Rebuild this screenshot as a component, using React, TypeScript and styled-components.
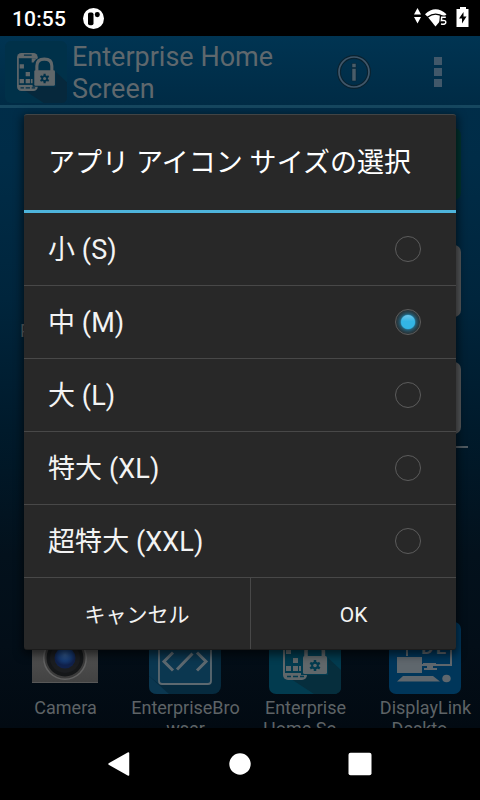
import React from "react";
import styled, { createGlobalStyle } from "styled-components";

const GlobalStyle = createGlobalStyle`
  * { box-sizing: border-box; }
  html, body { margin: 0; padding: 0; background: #000; overflow: hidden; }
  body { font-family: Roboto, "Noto Sans CJK JP", sans-serif; }
  button { font: inherit; border: 0; background: none; padding: 0; color: inherit; }
  svg { flex: none; display: block; }
`;

const Screen = styled.div`
  width: 480px;
  height: 800px;
  display: flex;
  flex-direction: column;
  background: #000;
  overflow: hidden;
`;

const StatusBar = styled.div`
  height: 36px;
  flex: none;
  display: flex;
  align-items: center;
  padding: 0 9px 0 12px;
  color: #fff;
`;

const Clock = styled.span`
  width: 71px;
  font-size: 21px;
  font-weight: 500;
  line-height: 36px;
  letter-spacing: 0.15px;
  padding-top: 1px;
`;

const StatusIcons = styled.div`
  margin-left: auto;
  display: flex;
  align-items: center;
`;

const Desktop = styled.main`
  position: relative;
  height: 692px;
  flex: none;
  overflow: hidden;
  background: linear-gradient(180deg, #002e4a 0%, #002c47 18%, #00253c 38%, #001a2b 57%, #03111c 75%, #030e18 88%, #020a12 100%);
`;

const AppBar = styled.header`
  height: 72px;
  display: flex;
  align-items: center;
  background: linear-gradient(180deg, #003452 0%, #002b45 100%);
  border-bottom: 3px solid #16475f;
  padding: 3px 0 0 5px;
`;

const AppTitle = styled.h1`
  width: 232px;
  flex: none;
  margin: 0 0 0 5px;
  font-size: 27px;
  font-weight: 400;
  line-height: 32px;
  padding-top: 1px;
  color: #5f686d;
`;

const AppBarActions = styled.div`
  flex: 1;
  display: flex;
  align-items: center;
  padding-left: 33px;
  gap: 63px;
`;

const AppGrid = styled.div`
  display: grid;
  grid-template-columns: repeat(4, 120px);
  grid-template-rows: 117px 117px 117px 143px 110px;
  padding: 20px 0 0 5px;
`;

const AppCell = styled.div<{ $column?: number; $row: number }>`
  grid-column: ${(p) => p.$column ?? 1};
  grid-row: ${(p) => p.$row};
  display: flex;
  flex-direction: column;
  align-items: center;
`;

const AppLabel = styled.span<{ $align?: string }>`
  margin-top: 3px;
  width: 120px;
  padding-left: ${(p) => (p.$align ? "15px" : "1px")};
  font-size: 18px;
  line-height: 21px;
  text-align: ${(p) => p.$align ?? "center"};
  color: #5e6366;
  white-space: pre;
`;

const Tile = styled.div<{ $color: string }>`
  width: 72px;
  height: 72px;
  flex: none;
  border-radius: 7px;
  background: ${(p) => p.$color};
`;

const Underline = styled.div`
  width: 86px;
  height: 2px;
  margin-top: 12px;
  background: #505a61;
`;

const Dialog = styled.section`
  position: absolute;
  left: 24px;
  top: 78px;
  width: 432px;
  height: 536px;
  display: flex;
  flex-direction: column;
  background: #282828;
  border-radius: 3px;
  border-top: 1px solid #414445;
  border-bottom: 1px solid #1c1c1c;
  box-shadow: 0 3px 9px 2px rgba(0, 0, 0, 0.55);
  color: #f3f3f3;
`;

const DialogTitle = styled.h2`
  margin: 0;
  height: 98px;
  flex: none;
  padding: 2px 0 0 24px;
  border-bottom: 3px solid #4eb4dc;
  font-size: 27px;
  font-weight: 400;
  line-height: 92px;
  letter-spacing: 0.06px;
  color: #fff;
  white-space: nowrap;
`;

const Option = styled.label`
  height: 73px;
  flex: none;
  display: flex;
  align-items: center;
  justify-content: space-between;
  padding: 0 35px 0 24px;
  border-bottom: 1px solid #484848;
`;

const OptionText = styled.span`
  padding-top: 2px;
  font-size: 27px;
  line-height: 40px;
  letter-spacing: 0.08px;
`;

const Radio = styled.span<{ $checked: boolean }>`
  width: 26px;
  height: 26px;
  flex: none;
  display: grid;
  place-items: center;
  border-radius: 50%;
  border: 1px solid #5c5c5c;
  ${(p) =>
    p.$checked &&
    `background: radial-gradient(circle, #33b5e5 0 6px, #235a71 8px, #27414c 10px, #292e30 12.5px);`}
  &::after {
    content: "";
    width: 14px;
    height: 14px;
    border-radius: 50%;
    background: ${(p) => (p.$checked ? "linear-gradient(#70c6e9 0, #33b5e5 45%)" : "transparent")};
  }
`;

const ButtonBar = styled.div`
  flex: 1;
  display: grid;
  grid-template-columns: 227px 1fr;
`;

const DialogButton = styled.button`
  padding-top: 2px;
  font-size: 21px;
  line-height: 30px;
  border-right: 1px solid #484848;
  &:last-child { border-right: 0; }
`;

const NavBar = styled.nav`
  height: 72px;
  flex: none;
  display: grid;
  grid-template-columns: repeat(3, 120px);
  justify-content: center;
  align-items: center;
  justify-items: center;
`;

function HomeScreenIcon({ size, faint }: { size: number; faint?: boolean }) {
  const tile = faint ? "#003149" : "#023b4f";
  const ink = "#60676a";
  return (
    <svg width={size} height={size} viewBox="0 0 72 72">
      <rect width="72" height="72" rx="7" fill={tile} />
      <path d="M57 34 72 48V65q0 7-7 7H45L22 57 36 50Z" fill={faint ? "#06283c" : "#062e3d"} />
      <rect x="14" y="14" width="24" height="44" rx="5" fill={ink} />
      <path d="M16 20h20v31H16z" fill={tile} />
      <path d="M17 27h5v5h-5zM24 36h5v5h-5zM17 44h5v5h-5zM24 44h5v5h-5zM30 44h4v5h-4zM31 20h5v5h-5z" fill={ink} />
      <path d="M22 16.5h9M18 54.5h4m2 0h5m2 0h4" stroke={tile} strokeWidth="1.5" />
      <path d="M33 34V28q0-9 12-9t12 9v6l2 1v18H32V34Z" fill={tile} />
      <path d="M37 35v-6q0-8 8.700-8t8.700 8v6" fill="none" stroke={ink} strokeWidth="3.600" />
      <rect x="34" y="34" width="24" height="18" rx="1.500" fill={ink} />
      <path d="M46 38v11M41.200 40.800l9.600 5.500M50.800 40.800l-9.600 5.500" stroke={tile} strokeWidth="2.500" />
      <circle cx="46" cy="43.500" r="3.800" fill={tile} />
      <circle cx="46" cy="43.500" r="1.800" fill={ink} />
    </svg>
  );
}

function CameraIcon() {
  return (
    <svg width="72" height="72" viewBox="0 0 72 72">
      <defs>
        <radialGradient id="lens" cx=".5" cy=".35">
          <stop offset="0" stopColor="#31578b" />
          <stop offset=".6" stopColor="#163a72" />
          <stop offset="1" stopColor="#10214b" />
        </radialGradient>
        <linearGradient id="camera-body" x1="0" y1="0" x2="0" y2="1">
          <stop offset="0" stopColor="#585858" />
          <stop offset="1" stopColor="#424242" />
        </linearGradient>
      </defs>
      <rect x="3" y="14" width="66" height="47" rx="1" fill="url(#camera-body)" />
      <path d="M3 60.500h66" stroke="#585858" />
      <circle cx="36" cy="36" r="22" fill="#626262" />
      <circle cx="36" cy="36" r="20.500" fill="#3b3b3b" />
      <circle cx="36" cy="36" r="18.500" fill="#151719" />
      <circle cx="36" cy="36" r="15" fill="#1b1d20" />
      <circle cx="36" cy="36" r="10.500" fill="url(#lens)" />
    </svg>
  );
}

function BrowserIcon() {
  return (
    <svg width="72" height="72" viewBox="0 0 72 72">
      <rect width="72" height="72" rx="8" fill="#062a3e" />
      <path d="M0 54 20 72H8q-8 0-8-8Z" fill="#0b3750" />
      <path d="M8 0h56q8 0 8 8v4L62 10v52H10L0 54V8q0-8 8-8Z" fill="#0b3750" />
      <rect x="10" y="10" width="52" height="52" rx="3" fill="#0b3750" stroke="#5d6970" strokeWidth="1.800" />
      <path
        d="m24 30.500-9 9 9 9M48 30.500l9 9-9 9M43.500 31.500 28 47.500"
        fill="none"
        stroke="#5d6970"
        strokeWidth="3"
      />
    </svg>
  );
}

const DisplayGlyph = styled.text`
  font: 700 19px Roboto, sans-serif;
  fill: #5f676d;
`;

function DisplayLinkIcon() {
  return (
    <svg width="72" height="72" viewBox="0 0 72 72">
      <rect width="72" height="72" rx="7" fill="#00365a" />
      <path d="M17 14h45v29H33" fill="none" stroke="#5f676d" strokeWidth="2" />
      <DisplayGlyph x="32" y="32" textLength="25">DL</DisplayGlyph>
      <rect x="8" y="35" width="25" height="16" fill="#5f676d" />
      <path d="M17 14h2v20h-2zM34 41h13v3h-3v2h4v2H35v-2h3v-2h-4zM14 54h30l7 5.500H8z" fill="#5f676d" />
      <ellipse cx="57.500" cy="56.500" rx="4.200" ry="3.800" fill="#5f676d" />
    </svg>
  );
}

function NotificationIcon() {
  return (
    <svg width="22" height="22" viewBox="0 0 22 22">
      <circle cx="10.500" cy="11.500" r="10.500" fill="#fff" />
      <rect x="5" y="5.500" width="5.500" height="12.800" rx="1.800" fill="#000" />
      <rect x="11.800" y="5" width="5" height="5.200" rx="2.400" fill="#000" />
    </svg>
  );
}

function ConnectivityIcons() {
  return (
    <svg width="57" height="24" viewBox="0 0 57 24">
      <g fill="#fff">
        <path d="M3.500 2 7 8.500H0ZM0 11h7l-3.500 6.500Z" />
        <path d="M11 8.200Q21.500-1.700 32.500 8.200L30.300 10.600Q21.500 4.300 13.300 10.600Z" />
        <path d="M14.200 11.400Q21.500 6 29 11.400L21.500 20.500Z" />
        <path d="M43.500 3H46V1h6v2h2.500v18h-12V3Z" />
      </g>
      <path d="m49.500 6-4.500 6.500h3v5l4.500-7h-3Z" fill="#000" />
      <path d="M31.500 11.300h-4l-.3 3.500q4.300-.9 4.300 1.500 0 2.600-4.500 1.600" fill="none" stroke="#000" strokeWidth="3.600" />
      <path d="M31.800 11.300h-4.100l-.3 3.300q4.400-.8 4.400 1.600 0 2.700-4.800 1.700" fill="none" stroke="#fff" strokeWidth="1.500" />
    </svg>
  );
}

function InfoIcon() {
  return (
    <svg width="34" height="34" viewBox="0 0 34 34">
      <circle cx="17" cy="17" r="15" fill="none" stroke="#0a2230" strokeWidth="4" />
      <circle cx="17" cy="17" r="15" fill="none" stroke="#40576a" strokeWidth="1.700" />
      <path d="M15 13.500h4V26h-4zM15 8.500h4v4h-4z" fill="#4a5d6a" stroke="#0a2230" strokeWidth=".5" />
    </svg>
  );
}

function OverflowIcon() {
  return (
    <svg width="8" height="30" viewBox="0 0 8 30">
      <path d="M0 0h8v8H0zM0 11h8v8H0zM0 22h8v8H0z" fill="#41586a" />
    </svg>
  );
}

const sizes = ["小 (S)", "中 (M)", "大 (L)", "特大 (XL)", "超特大 (XXL)"];

export default function App() {
  const selected = 1;
  return (
    <Screen>
      <GlobalStyle />
      <StatusBar>
        <Clock>10:55</Clock>
        <NotificationIcon />
        <StatusIcons>
          <ConnectivityIcons />
        </StatusIcons>
      </StatusBar>
      <Desktop>
        <AppBar>
          <HomeScreenIcon size={62} faint />
          <AppTitle>Enterprise Home Screen</AppTitle>
          <AppBarActions>
            <InfoIcon />
            <OverflowIcon />
          </AppBarActions>
        </AppBar>
        <AppGrid>
          <AppCell $column={4} $row={1}>
            <Tile $color="#00332f" />
          </AppCell>
          <AppCell $row={2}>
            <Tile $color="#56585a" />
            <AppLabel $align="left">P</AppLabel>
          </AppCell>
          <AppCell $column={4} $row={2}>
            <Tile $color="#56585a" />
          </AppCell>
          <AppCell $column={4} $row={3}>
            <Tile $color="#56585a" />
            <Underline />
          </AppCell>
          <AppCell $row={5}>
            <CameraIcon />
            <AppLabel>Camera</AppLabel>
          </AppCell>
          <AppCell $column={2} $row={5}>
            <BrowserIcon />
            <AppLabel>{"EnterpriseBro\nwser"}</AppLabel>
          </AppCell>
          <AppCell $column={3} $row={5}>
            <HomeScreenIcon size={72} />
            <AppLabel>{"Enterprise\nHome Sc…"}</AppLabel>
          </AppCell>
          <AppCell $column={4} $row={5}>
            <DisplayLinkIcon />
            <AppLabel>{"DisplayLink\nDeskto…"}</AppLabel>
          </AppCell>
        </AppGrid>
        <Dialog role="dialog" aria-modal="true">
          <DialogTitle>アプリ アイコン サイズの選択</DialogTitle>
          {sizes.map((label, i) => (
            <Option key={label}>
              <OptionText>{label}</OptionText>
              <Radio $checked={i === selected} />
            </Option>
          ))}
          <ButtonBar>
            <DialogButton>キャンセル</DialogButton>
            <DialogButton>OK</DialogButton>
          </ButtonBar>
        </Dialog>
      </Desktop>
      <NavBar>
        <svg width="24" height="26" viewBox="0 0 24 26">
          <path d="M1 13 20.500 2v22Z" fill="#fff" stroke="#fff" strokeWidth="1.500" strokeLinejoin="round" />
        </svg>
        <svg width="22" height="22" viewBox="0 0 22 22">
          <circle cx="11" cy="11" r="10.700" fill="#fff" />
        </svg>
        <svg width="24" height="24" viewBox="0 0 24 24">
          <rect x=".5" y=".7" width="23" height="22.600" rx="2" fill="#fff" />
        </svg>
      </NavBar>
    </Screen>
  );
}
